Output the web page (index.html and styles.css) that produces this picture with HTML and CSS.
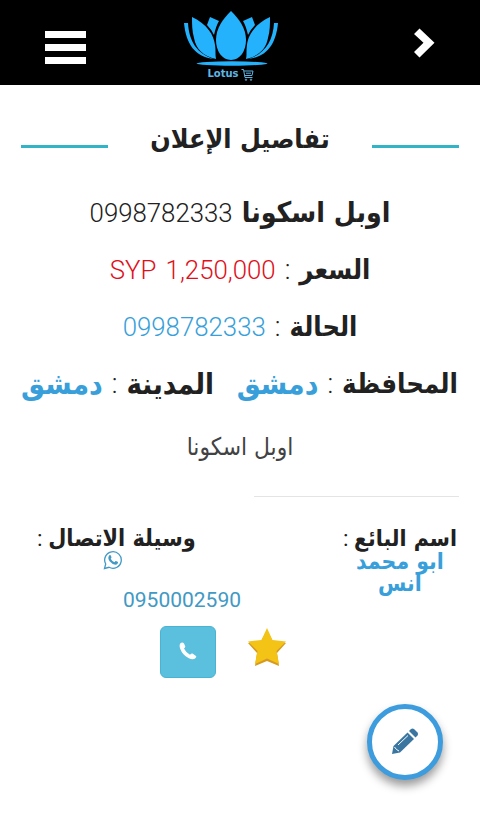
FILE: index.html
```
<!doctype html>
<html lang="ar" dir="rtl">
  <head>
    <meta charset="UTF-8" />
    <meta name="viewport" content="width=device-width, initial-scale=1.0" />
    <title>Lotus - تفاصيل الإعلان</title>
    <link rel="stylesheet" href="styles.css">
  </head>
  <body>
    <header class="navbar">
      <a class="nav-back" href="#" aria-label="رجوع">
        <svg width="22" height="30" viewBox="0 0 22 30">
          <path d="M1 6 6.500 .5 21.500 14.800 6.500 29.500 1 24 10.500 14.800z" fill="#fff" />
        </svg>
      </a>
      <a class="logo" href="#" dir="ltr">
        <svg width="96" height="56" viewBox="0 0 96 56">
          <g fill="#24b2fc">
            <path d="M48 0C56 8 63 17 63 29C63 40 57 49 48 49C39 49 33 40 33 29C33 17 40 8 48 0z" />
            <path d="M9 6C24 13 31 24 32 34C33 39 32 44 33 48C20 45 13 38 11 27C9 20 9 13 9 6z" />
            <path d="M87 6C72 13 65 24 64 34C63 39 64 44 63 48C76 45 83 38 85 27C87 20 87 13 87 6z" />
            <path d="M27 6 36 10Q33 15 31 24Q28 18 24 14z" />
            <path d="M69 6 60 10Q63 15 65 24Q68 18 72 14z" />
            <path d="M1 12H5C6 30 14 43 31 48C12 46 3 33 1 12z" />
            <path d="M95 12H91C90 30 82 43 65 48C84 46 93 33 95 12z" />
            <ellipse cx="49" cy="52.500" rx="35.500" ry="2.200" />
          </g>
        </svg>
        <span class="logo-name">
          Lotus
          <svg width="13" height="13" viewBox="0 0 13 13" fill="none" stroke="#5fb6e4">
            <path d="M.5 1.500H2.500L4 9.500H11.500M3 3H12L11 7.500H3.800M5 5.200H10" />
            <circle cx="5" cy="11.700" r=".7" />
            <circle cx="10" cy="11.700" r=".7" />
          </svg>
        </span>
      </a>
      <button class="nav-toggle" aria-label="القائمة">
        <span></span>
        <span></span>
        <span></span>
      </button>
    </header>

    <main class="ad">
      <div class="ad-heading">
        <h1>تفاصيل الإعلان</h1>
      </div>

      <div class="row">
        <b class="name">اوبل اسكونا</b>
        <span class="num">0998782333</span>
      </div>
      <div class="row">
        <b>السعر</b>
        <span class="colon">:</span>
        <span class="num price" dir="ltr">SYP 1,250,000</span>
      </div>
      <div class="row">
        <b>الحالة</b>
        <span class="colon">:</span>
        <span class="num blue">0998782333</span>
      </div>
      <div class="row places">
        <div class="place">
          <b class="province">المحافظة</b>
          <span class="colon">:</span>
          <b class="blue">دمشق</b>
        </div>
        <div class="place">
          <b class="city">المدينة</b>
          <span class="colon">:</span>
          <b class="blue">دمشق</b>
        </div>
      </div>

      <p class="description">اوبل اسكونا</p>
      <hr />

      <div class="contact">
        <div class="seller">
          <div class="label"><b>اسم البائع</b> :</div>
          <div class="seller-name">ابو محمد<br />انس</div>
        </div>
        <div class="method">
          <div class="label"><b>وسيلة الاتصال</b> :</div>
          <svg class="whatsapp" width="20" height="20" viewBox="0 0 20 20">
            <path d="M1.500 18.500 2.700 14A8.300 8.300 0 1 1 6 17.300z" fill="none" stroke="#4199c4" stroke-width="1.300" />
            <path d="M6.300 5.300Q7.300 4.500 7.800 5.500L8.500 7.300Q8.600 7.700 7.700 8.700Q9 11.200 11.500 12.200L12.500 11.100Q12.900 10.800 15 12Q15.200 14.400 12.400 14.700Q9.500 14.600 6.600 11.200Q4.200 8 6.300 5.300z" fill="#4199c4" />
          </svg>
        </div>
      </div>

      <div class="phone">0950002590</div>
      <div class="actions">
        <svg width="40" height="41" viewBox="0 -1 40 41">
          <path d="M20 3 25.500 14 39 16 30 26 32 39 20 34 8 39 10 26 1 16 14 14z" fill="#d69a20" />
          <path d="M20 1 25.500 13 39 14.500 29.500 24 32 37 20 31.500 8 37 10.500 24 1 14.500 14.500 13z" fill="#f3c316" />
        </svg>
        <a class="call" href="#" aria-label="اتصال">
          <svg width="18" height="18" viewBox="0 0 18 18">
            <path d="M1.400 1.200Q3.500-.3 5 1.500L6.300 4.400Q6.400 5.400 5 6.500Q6.700 10.400 11 12.700Q12.500 11.100 13.500 11.600L17 14Q17.800 14.700 16.300 16.200Q14 18.500 9.400 16Q3.500 13 1.100 6.500Q0 3 1.400 1.200z" fill="#fff" />
          </svg>
        </a>
      </div>
    </main>

    <a class="edit-button" href="#" aria-label="تعديل">
      <svg width="27" height="27" viewBox="0 0 27 27">
        <path d="M0 26 1.500 18 15.500 4.500 22 11 8 24.500z" fill="#3a76a0" />
        <path d="M17 3 19 1Q20.500 0 22 1L25.500 4.500Q26.800 6 25.500 7.500L23.500 9.500z" fill="#3a76a0" />
        <path d="M6 17 16 7.500M2.500 19 4.500 21.500 7 23" fill="none" stroke="#fff" />
      </svg>
    </a>
  </body>
</html>
```
FILE: styles.css
```
* {
  box-sizing: border-box;
}

body {
  margin: 0;
  min-height: 817px;
  background: #fff;
  color: #212121;
  font-family: Roboto, 'DejaVu Sans', sans-serif;
}

a {
  text-decoration: none;
}

b,
h1,
.seller-name {
  font-family: 'DejaVu Sans Condensed', 'DejaVu Sans', sans-serif;
  font-stretch: condensed;
  font-weight: bold;
}

.navbar {
  display: grid;
  grid-template-columns: 45px 1fr 45px;
  height: 85px;
  padding: 0 45px 0 45px;
  background: #000;
}

.nav-back {
  margin-top: 28px;
}

.logo {
  display: flex;
  flex-direction: column;
  align-items: center;
  padding: 11px 19px 0 0;
}

.logo-name {
  display: flex;
  gap: 2px;
  padding-top: 1px;
  color: #5fb6e4;
  font: bold 10px/12px 'DejaVu Sans', sans-serif;
}

.nav-toggle {
  display: flex;
  flex-direction: column;
  gap: 6px;
  justify-self: end;
  width: 41px;
  margin-top: 31px;
  padding: 0;
  border: 0;
  background: none;
}

.nav-toggle span {
  height: 7px;
  width: 100%;
  background: #fff;
}

.ad {
  padding: 0 21px;
}

.ad-heading {
  display: flex;
  justify-content: space-between;
  align-items: center;
  height: 99px;
  padding-top: 23px;
}

.ad-heading::before,
.ad-heading::after {
  content: '';
  width: 87px;
  height: 3px;
  background: #30b4c6;
}

.ad-heading h1 {
  margin: 0 0 14px;
  font-size: 26.7px;
  line-height: 40px;
}

.row {
  display: flex;
  justify-content: center;
  align-items: center;
  gap: 9px;
  height: 57px;
  font-size: 27px;
  line-height: 40px;
  white-space: nowrap;
}

.name {
  font-size: 28.2px;
}

.num {
  font-size: 25.8px;
  font-weight: 300;
}

.colon {
  font-weight: 300;
}

.price {
  color: #e0101b;
  word-spacing: 3px;
}

.blue,
.seller-name {
  color: #389fda;
}

.places {
  justify-content: space-between;
  padding-right: 1px;
}

.place {
  display: flex;
  gap: 9px;
}

.place .blue {
  font-size: 29.8px;
}

.province {
  font-size: 27.3px;
}

.city {
  font-size: 29px;
}

.description {
  height: 40px;
  margin: 15px 0 0;
  color: #424242;
  font: condensed 24.3px/40px 'DejaVu Sans Condensed', 'DejaVu Sans', sans-serif;
  text-align: center;
}

hr {
  width: 205px;
  height: 1px;
  margin: 29px 0 0;
  border: 0;
  background: #e4e4e4;
}

.contact {
  display: flex;
  justify-content: space-between;
  height: 91px;
  padding: 30px 2px 0 16px;
  font-size: 22.8px;
  line-height: 22px;
  text-align: center;
  white-space: nowrap;
}

.method b {
  font-size: 23.2px;
}

.whatsapp {
  display: block;
  margin: 0 auto;
  transform: translateX(-3px);
}

.phone {
  width: 118px;
  margin: 0 218px 0 0;
  color: #4199c4;
  font-size: 21px;
  line-height: 24px;
}

.actions {
  display: flex;
  gap: 31px;
  margin-top: 14px;
  padding-right: 172px;
}

.call {
  display: grid;
  place-items: center;
  width: 56px;
  height: 52px;
  padding-bottom: 3px;
  border: 1px solid #48b3d2;
  border-radius: 6px;
  background: #5bc0de;
}

.edit-button {
  position: fixed;
  left: 367px;
  top: 704px;
  display: grid;
  place-items: center;
  width: 76px;
  height: 76px;
  padding: 0 0 2px;
  border: 5px solid #3c9cdd;
  border-radius: 50%;
  background: #fff;
  box-shadow: 0 6px 10px rgba(0, 0, 0, 0.4);
}
```
